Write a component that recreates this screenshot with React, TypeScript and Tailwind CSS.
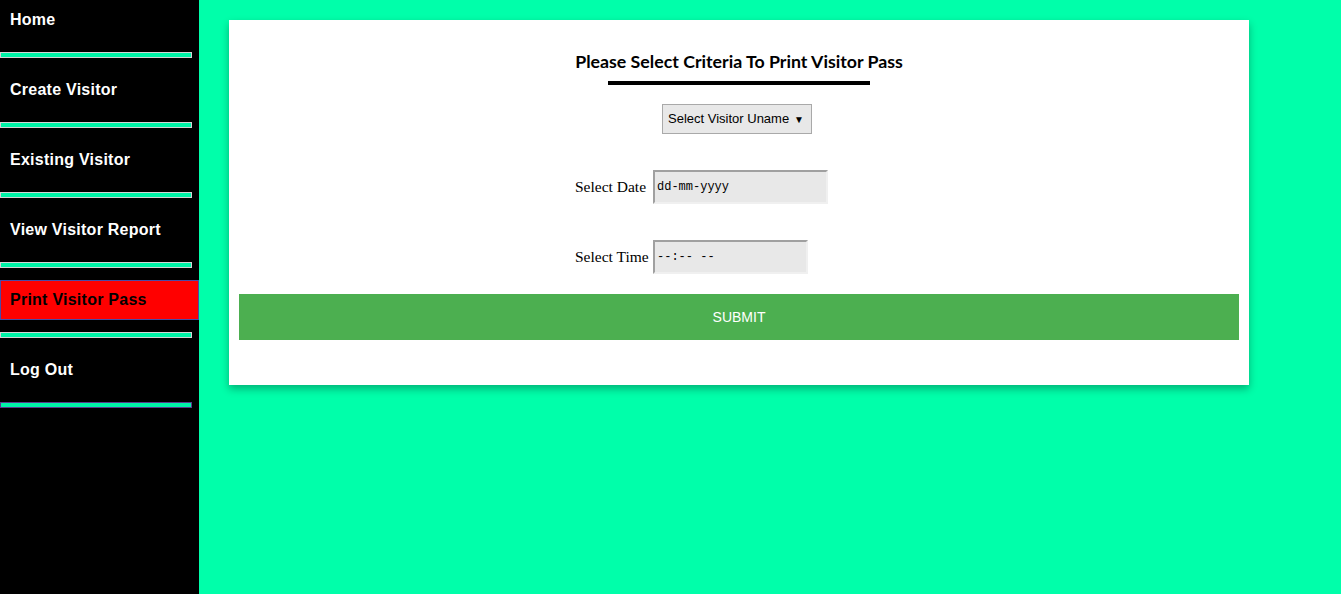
import React from "react";

const links = [
  { label: "Home", active: false },
  { label: "Create Visitor", active: false },
  { label: "Existing Visitor", active: false },
  { label: "View Visitor Report", active: false },
  { label: "Print Visitor Pass", active: true },
  { label: "Log Out", active: false },
];

function Sidebar() {
  return (
    <nav className="w-[199px] shrink-0 bg-black min-h-[594px]">
      {links.map((l, i) => (
        <div key={l.label}>
          <a
            href="#"
            className={
              "flex h-[40px] items-center pl-[9px] border text-[16px] font-bold tracking-[0.25px] whitespace-nowrap " +
              (l.active
                ? "bg-[#ff0000] border-[#4b4ba6] text-black"
                : "border-transparent text-white")
            }
            style={{ fontFamily: '"Liberation Sans", Arial, sans-serif' }}
          >
            {l.label}
          </a>
          <div
            className={
              "mt-[12px] mb-[12px] h-[6px] w-[192px] border bg-[#00f5a8] " +
              (i === links.length - 1 ? "border-[#5b3b8c]" : "border-[#d4d4d4]")
            }
          />
        </div>
      ))}
    </nav>
  );
}

export default function App() {
  return (
    <div className="flex min-h-[594px] bg-[#00ffaa]">
      <Sidebar />
      <main className="flex-1">
        <div className="ml-[30px] mt-[20px] w-[1020px] bg-white shadow-[0_4px_8px_rgba(0,0,0,0.3)] px-[10px] pb-[45px]">
          <div className="flex flex-col items-center pt-[30px]">
            <h2
              className="text-[17.75px] font-bold text-black leading-[22px] whitespace-nowrap"
              style={{ fontFamily: 'Lato, "Open Sans", sans-serif' }}
            >
              Please Select Criteria To Print Visitor Pass
            </h2>
            <div className="mt-[9px] h-[4px] w-[262px] bg-black" />
            <div
              className="mt-[19px] mr-[4px] flex h-[30px] w-[150px] items-center justify-between border border-[#a9a9a9] bg-[#e8e8e8] pl-[5px] pr-[7px] text-[13px] text-black whitespace-nowrap"
              style={{ fontFamily: '"Liberation Sans", Arial, sans-serif' }}
            >
              <span>Select Visitor Uname</span>
              <span className="text-[10px]">▼</span>
            </div>
          </div>

          <div
            className="mt-[36px] flex items-center pl-[336px]"
            style={{ fontFamily: '"Liberation Serif", "Times New Roman", serif' }}
          >
            <span className="text-[15.5px] text-black w-[78px]">Select Date</span>
            <div
              className="flex h-[34px] w-[175px] items-center border-2 border-t-[#a0a0a0] border-l-[#a0a0a0] border-r-[#f0f0f0] border-b-[#f0f0f0] bg-[#e8e8e8] pl-[2px] text-[12px] text-black"
              style={{ fontFamily: '"Liberation Mono", monospace' }}
            >
              dd-mm-yyyy
            </div>
          </div>

          <div
            className="mt-[36px] flex items-center pl-[336px]"
            style={{ fontFamily: '"Liberation Serif", "Times New Roman", serif' }}
          >
            <span className="text-[15.5px] text-black w-[78px]">Select Time</span>
            <div
              className="flex h-[34px] w-[155px] items-center border-2 border-t-[#a0a0a0] border-l-[#a0a0a0] border-r-[#f0f0f0] border-b-[#f0f0f0] bg-[#e8e8e8] pl-[2px] text-[12px] text-black whitespace-pre"
              style={{ fontFamily: '"Liberation Mono", monospace' }}
            >
              {"--:-- --"}
            </div>
          </div>

          <button
            className="mt-[20px] block h-[46px] w-full bg-[#4caf50] text-[14px] text-white"
            style={{ fontFamily: '"Liberation Sans", Arial, sans-serif' }}
          >
            SUBMIT
          </button>
        </div>
      </main>
    </div>
  );
}
